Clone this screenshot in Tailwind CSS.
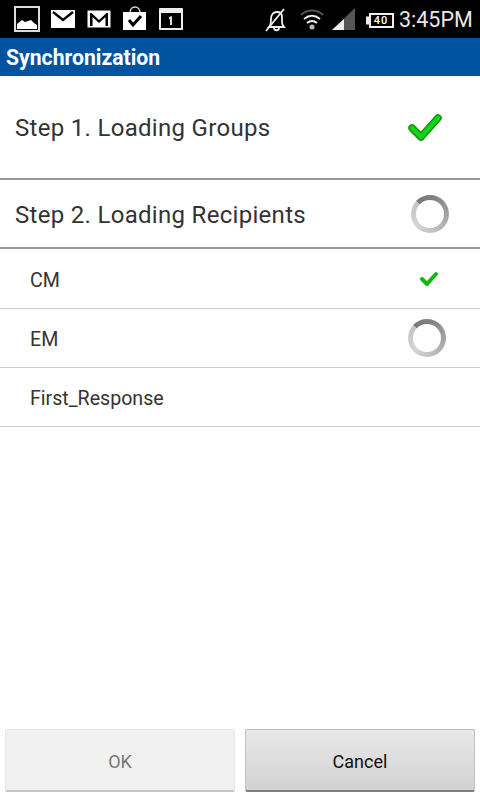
<!DOCTYPE html>
<html lang="en">
<head>
    <meta charset="UTF-8">
    <meta name="viewport" content="width=device-width, initial-scale=1.0">
    <title>Synchronization</title>
    <script src="https://cdn.jsdelivr.net/npm/@tailwindcss/browser@4"></script>
</head>
<body class="bg-white w-[480px] h-[800px] overflow-hidden flex flex-col font-['Roboto',sans-serif]">
    <!-- Status bar -->
    <div class="h-[38px] bg-black flex items-center shrink-0 text-white [&>*]:shrink-0">
        <svg class="ml-[14px]" width="26" height="26" viewBox="0 0 26 26"><rect x="1" y="1" width="24" height="24" fill="none" stroke="#ddd" stroke-width="2"/><path d="M3 23v-5l5-4 3 2 3-1 3-1 3 3 3 2v4z" fill="#fff"/></svg>
        <svg class="ml-[11px]" width="24" height="18" viewBox="0 0 24 18"><rect width="24" height="18" fill="#fff"/><path d="M2 2l10 8 10-8" fill="none" stroke="#000" stroke-width="2.4"/></svg>
        <svg class="ml-[12px]" width="24" height="18" viewBox="0 0 24 18"><rect x=".5" y=".5" width="23" height="17" fill="#fff"/><path d="M3 16V3h1.500l7.500 7 7.500-7H21v13h-2.500V7L12 13 5.500 7v9z" fill="#000"/></svg>
        <svg class="ml-[12px] mt-[-2px]" width="24" height="24" viewBox="0 0 24 24"><path d="M7 7c0-8 10-8 10 0" fill="none" stroke="#ddd" stroke-width="1.500"/><rect y="6" width="23" height="18" fill="#fff"/><path d="M6 14l4 5 8-9" fill="none" stroke="#000" stroke-width="3"/></svg>
        <svg class="ml-[12px]" width="24" height="22" viewBox="0 0 24 22"><rect width="24" height="22" rx="1" fill="#eee"/><rect x="2" y="5" width="20" height="15" fill="#000"/><path d="M10 9l3-1v9h-2v-6l-1 .5z" fill="#ddd"/></svg>
        <svg class="ml-[82px] mt-[1px]" width="22" height="24" viewBox="0 0 22 24"><path d="M4 19c2-2 2-4 2-8s2-7 6-7c3 0 5 2 5 5v5c0 2 1 4 2 5zM9 20c0 3 5 3 5 0" fill="none" stroke="#eee" stroke-width="1.800"/><path d="M1 23L19 1" stroke="#eee" stroke-width="1.800"/></svg>
        <svg class="ml-[13px] mt-[-1px]" width="24" height="22" viewBox="0 0 24 22"><path d="M1 7c6-6 16-6 22 0" fill="none" stroke="#555" stroke-width="2"/><path d="M4 11c5-4 11-4 16 0M7 15c3-2.500 7-2.500 10 0" fill="none" stroke="#eee" stroke-width="2"/><circle cx="12" cy="19" r="2.500" fill="#bbb"/></svg>
        <svg class="ml-[8px]" width="24" height="22" viewBox="0 0 24 22"><path d="M0 22L23 0v22z" fill="#555"/><path d="M0 22l12-11v11z" fill="#eee"/></svg>
        <svg class="ml-[10px] mt-[2px]" width="28" height="15" viewBox="0 0 28 15"><rect y="3.500" width="3" height="8" fill="#eee"/><rect x="3" width="25" height="15" fill="#eee"/><rect x="5" y="2" width="21" height="11" fill="#000"/></svg>
        <span class="ml-[-22px] mt-[2px] text-[11px] leading-none font-medium tracking-[1px] w-[18px] text-center">40</span>
        <span class="ml-[9px] mt-[2px] text-[21.500px] leading-none text-[#e8e8e8]">3:45PM</span>
    </div>

    <!-- Title bar -->
    <div class="h-[38px] bg-[#00549f] flex items-center pl-[6px] pt-[2px] shrink-0">
        <h1 class="text-white text-[21.200px] font-bold leading-none">Synchronization</h1>
    </div>

    <!-- Step 1 -->
    <div class="h-[104px] flex items-center justify-between pl-[15px] pr-[38px] pt-[1px] shrink-0 border-b-2 border-[#999]">
        <span class="text-[24px] tracking-[0.3px] text-[#333]">Step 1. Loading Groups</span>
        <svg width="34" height="30" viewBox="0 0 34 30"><path d="M4 15l9 9L30 5" fill="none" stroke="#0a9a0a" stroke-width="7.500" stroke-linecap="round" stroke-linejoin="round"/><path d="M4 15l9 9L30 5" fill="none" stroke="#14d414" stroke-width="4.500" stroke-linecap="round" stroke-linejoin="round"/></svg>
    </div>

    <!-- Step 2 -->
    <div class="h-[69px] flex items-center justify-between pl-[15px] pr-[31px] shrink-0 border-b-2 border-[#999]">
        <span class="mt-[3px] text-[24px] tracking-[0.3px] text-[#333]">Step 2. Loading Recipients</span>
        <div class="mt-[1px] w-[38px] h-[38px] rounded-full bg-[conic-gradient(from_-45deg,#777,#858585_70deg,#a0a0a0_130deg,#b8b8b8_190deg,#d4d4d4_270deg,#c4c4c4_358deg,#777)] flex items-center justify-center">
            <div class="w-[28px] h-[28px] rounded-full bg-white"></div>
        </div>
    </div>

    <!-- Groups -->
    <div class="h-[60px] flex items-center justify-between pl-[30px] pr-[41px] shrink-0 border-b border-[#ccc]">
        <span class="mt-[5px] text-[19.600px] text-[#333]">CM</span>
        <svg width="20" height="18" viewBox="0 0 20 18"><path d="M3 9l5 5L17 4" fill="none" stroke="#0fb80f" stroke-width="4" stroke-linecap="round" stroke-linejoin="round"/></svg>
    </div>
    <div class="h-[59px] flex items-center justify-between pl-[30px] pr-[34px] shrink-0 border-b border-[#ccc]">
        <span class="mt-[3px] text-[19.600px] text-[#333]">EM</span>
        <div class="w-[38px] h-[38px] rounded-full bg-[conic-gradient(from_-45deg,#777,#858585_70deg,#a0a0a0_130deg,#b8b8b8_190deg,#d4d4d4_270deg,#c4c4c4_358deg,#777)] flex items-center justify-center">
            <div class="w-[28px] h-[28px] rounded-full bg-white"></div>
        </div>
    </div>
    <div class="h-[59px] flex items-center pl-[30px] shrink-0 border-b border-[#ccc]">
        <span class="mt-[3px] text-[19.600px] text-[#333]">First_Response</span>
    </div>

    <!-- Buttons -->
    <div class="mt-auto flex gap-[10px] px-[5px] pb-[8px]">
        <button class="w-[230px] h-[63px] pt-[2px] rounded-[2px] bg-[#f1f1f1] border border-[#e6e6e6] border-b-2 border-b-[#c8c8c8] text-[18px] text-[#777]">OK</button>
        <button class="w-[230px] h-[63px] pt-[2px] rounded-[2px] bg-linear-to-b from-[#e8e8e8] to-[#d2d2d2] border border-[#c0c0c0] border-b-2 border-b-[#808080] text-[18px] text-[#111]">Cancel</button>
    </div>
</body>
</html>
